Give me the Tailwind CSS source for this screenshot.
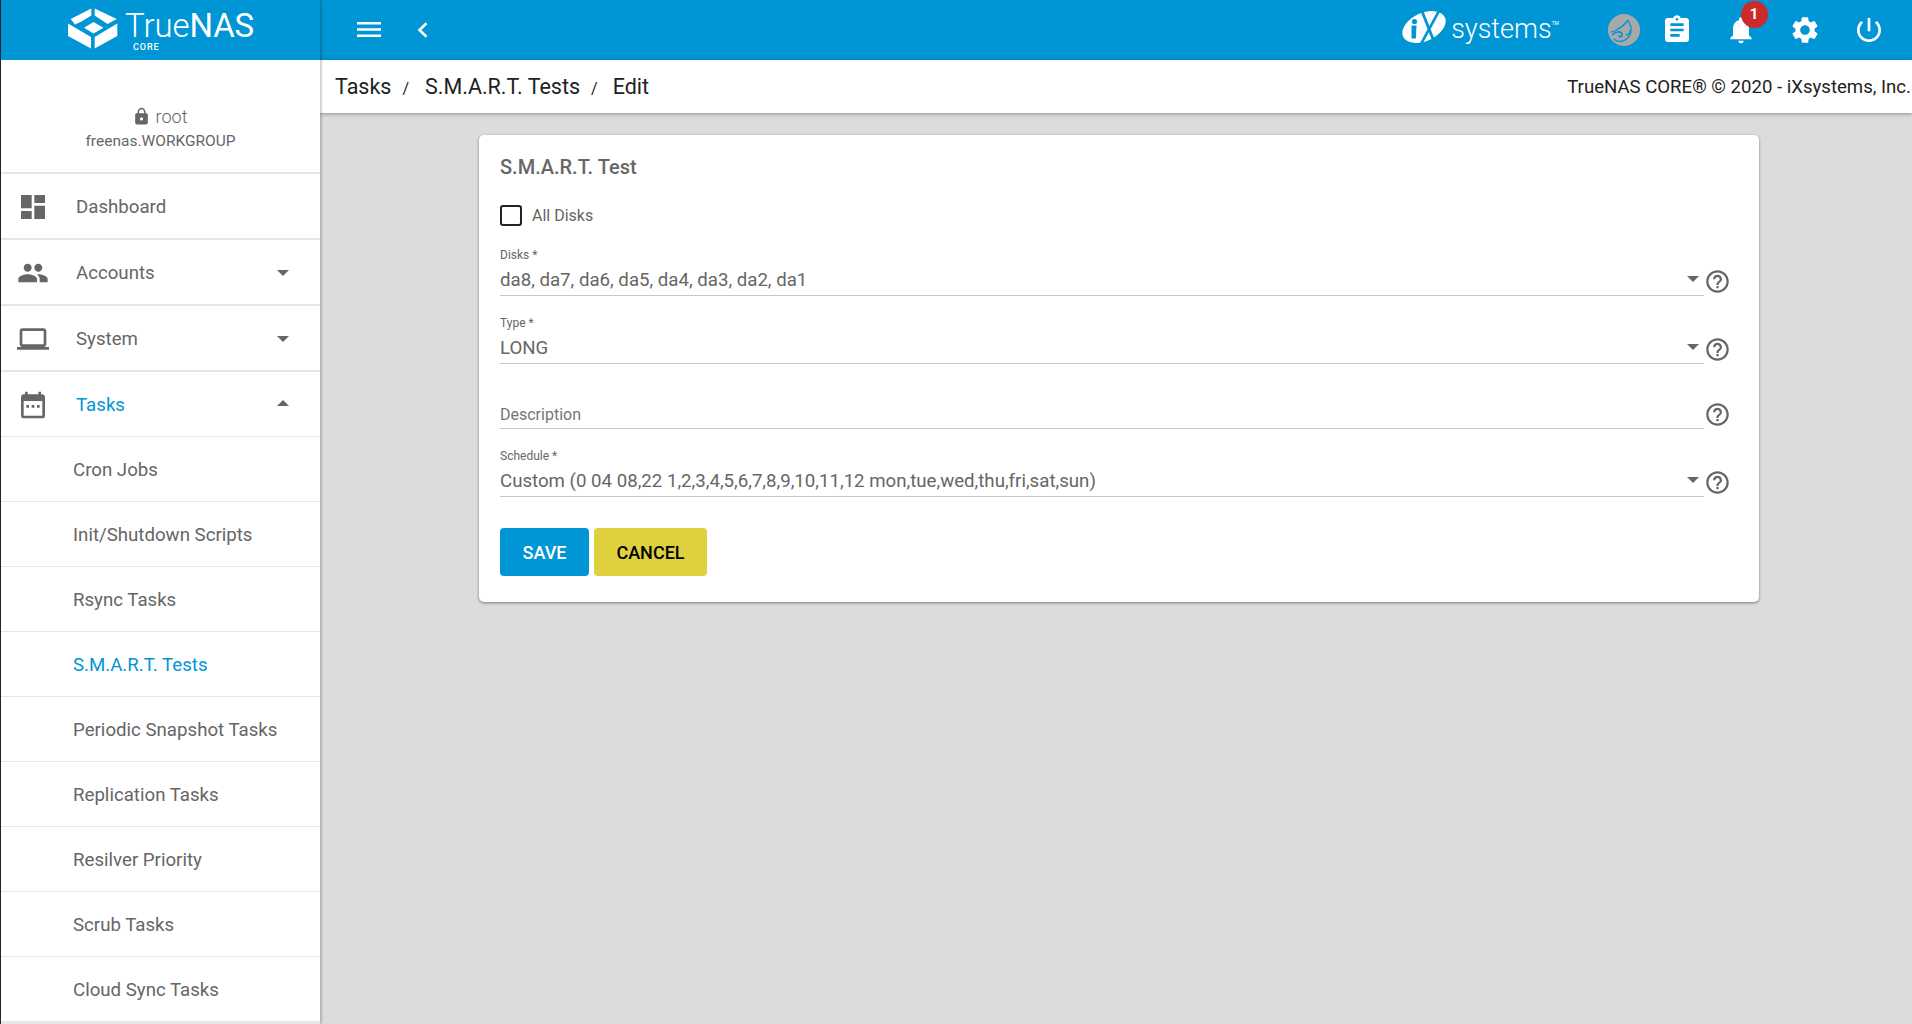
<!DOCTYPE html>
<html lang="en">
<head>
    <meta charset="UTF-8">
    <title>TrueNAS - S.M.A.R.T. Tests</title>
    <script src="https://cdn.jsdelivr.net/npm/@tailwindcss/browser@4"></script>
</head>
<body class="h-screen w-screen overflow-hidden bg-[#dcdcdc] font-[Roboto,sans-serif]">
    <div class="flex h-[1024px] w-[1912px]">
        <div class="w-px shrink-0 bg-[#1e2a30]"></div>

        <!-- sidebar -->
        <aside class="w-[319px] shrink-0 flex flex-col bg-white shadow-[1px_0_3px_rgba(0,0,0,0.3)] z-20 overflow-hidden">
            <div class="h-[60px] shrink-0 bg-[#0095d5] flex items-start">
                <svg class="ml-[63px] mt-[5px] w-[60px] h-[44px]" viewBox="0 0 60 44" fill="#fff">
                    <path d="M6.700 14 27.300 3.500v7L17.500 16.500 11 19.500z"/>
                    <path d="M30.700 3.500 52.700 14l-9.200 5-12.800-8.500z"/>
                    <path d="M20 22.700 29.500 17l10 5.700-10 5.800z"/>
                    <path d="M4 18.500 27 32v11.500L4 31z"/>
                    <path d="M53.300 18.500V31L30.700 43.500V32z"/>
                </svg>
                <div class="ml-[1px] pt-[11px] flex flex-col text-white">
                    <div class="text-[33px] leading-[30px] tracking-[-0.1px] whitespace-nowrap"><span class="font-light">True</span><span class="font-normal">NAS</span></div>
                    <div class="ml-[8px] mt-[2px] text-[9px] leading-[9px] font-medium tracking-[0.9px]">CORE</div>
                </div>
            </div>
            <div class="h-[114px] shrink-0 border-b-2 border-[#e6e6e6] flex flex-col items-center pt-[46px] text-[#666]">
                <div class="flex items-center h-[20px] pr-[2px]">
                    <svg class="w-[19px] h-[19px] mr-[5px]" viewBox="0 0 24 24" fill="#666"><path d="M18 8h-1V6c0-2.760-2.240-5-5-5S7 3.240 7 6v2H6c-1.100 0-2 .9-2 2v10c0 1.100.9 2 2 2h12c1.100 0 2-.9 2-2V10c0-1.100-.9-2-2-2zm-6 9c-1.100 0-2-.9-2-2s.9-2 2-2 2 .9 2 2-.9 2-2 2zm3.100-9H8.900V6c0-1.710 1.390-3.100 3.100-3.100 1.710 0 3.100 1.390 3.100 3.100v2z"/></svg>
                    <span class="text-[18px] font-light">root</span>
                </div>
                <div class="text-[15.500px] leading-[19px] mt-[6px]">freenas.WORKGROUP</div>
            </div>

            <nav class="flex flex-col text-[#666] text-[18.670px]">
                <div class="h-[66px] shrink-0 flex items-center border-b-2 border-[#e6e6e6] pl-[16px] pt-[2px]">
                    <svg class="w-[32px] h-[32px] mr-[27px]" viewBox="0 0 24 24" fill="#666"><path d="M3 13h8V3H3v10zm0 8h8v-6H3v6zm10 0h8V11h-8v10zm0-18v6h8V3h-8z"/></svg>
                    <span>Dashboard</span>
                </div>
                <div class="h-[66px] shrink-0 flex items-center border-b-2 border-[#e6e6e6] pl-[16px] pt-[2px]">
                    <svg class="w-[32px] h-[32px] mr-[27px]" viewBox="0 0 24 24" fill="#666"><path d="M16 11c1.660 0 2.990-1.340 2.990-3S17.660 5 16 5c-1.660 0-3 1.340-3 3s1.340 3 3 3zm-8 0c1.660 0 2.990-1.340 2.990-3S9.660 5 8 5C6.340 5 5 6.340 5 8s1.340 3 3 3zm0 2c-2.330 0-7 1.170-7 3.500V19h14v-2.500c0-2.330-4.670-3.500-7-3.500zm8 0c-.29 0-.62.02-.97.05 1.160.84 1.970 1.970 1.970 3.450V19h6v-2.500c0-2.330-4.670-3.500-7-3.500z"/></svg>
                    <span class="flex-1">Accounts</span>
                    <span class="mr-[31px] w-0 h-0 border-x-[6.500px] border-x-transparent border-t-[6.500px] border-t-[#666]"></span>
                </div>
                <div class="h-[66px] shrink-0 flex items-center border-b-2 border-[#e6e6e6] pl-[16px] pt-[2px]">
                    <svg class="w-[32px] h-[32px] mr-[27px]" viewBox="0 0 24 24" fill="#666"><path d="M20 18c1.100 0 1.990-.9 1.990-2L22 6c0-1.100-.9-2-2-2H4c-1.100 0-2 .9-2 2v10c0 1.100.9 2 2 2H0v2h24v-2h-4zM4 6h16v10H4V6z"/></svg>
                    <span class="flex-1">System</span>
                    <span class="mr-[31px] w-0 h-0 border-x-[6.500px] border-x-transparent border-t-[6.500px] border-t-[#666]"></span>
                </div>
                <div class="h-[65px] shrink-0 flex items-center border-b border-[#e6e6e6] pl-[16px] pt-[2px]">
                    <svg class="w-[32px] h-[32px] mr-[27px]" viewBox="0 0 24 24" fill="#666"><path d="M19 4h-1V2h-2v2H8V2H6v2H5c-1.100 0-2 .9-2 2v14c0 1.100.9 2 2 2h14c1.100 0 2-.9 2-2V6c0-1.100-.9-2-2-2zm0 16H5V9h14v11zM7 12h2v2H7zm4 0h2v2h-2zm4 0h2v2h-2z"/></svg>
                    <span class="flex-1 text-[#0095d5]">Tasks</span>
                    <span class="mr-[31px] mb-[4px] w-0 h-0 border-x-[6.500px] border-x-transparent border-b-[6.500px] border-b-[#666]"></span>
                </div>
                <a class="h-[65px] shrink-0 flex items-center border-b border-[#e6e6e6] pl-[72px] pt-[2px]">Cron Jobs</a>
                <a class="h-[65px] shrink-0 flex items-center border-b border-[#e6e6e6] pl-[72px] pt-[2px]">Init/Shutdown Scripts</a>
                <a class="h-[65px] shrink-0 flex items-center border-b border-[#e6e6e6] pl-[72px] pt-[2px]">Rsync Tasks</a>
                <a class="h-[65px] shrink-0 flex items-center border-b border-[#e6e6e6] pl-[72px] pt-[2px] text-[#0095d5]">S.M.A.R.T. Tests</a>
                <a class="h-[65px] shrink-0 flex items-center border-b border-[#e6e6e6] pl-[72px] pt-[2px]">Periodic Snapshot Tasks</a>
                <a class="h-[65px] shrink-0 flex items-center border-b border-[#e6e6e6] pl-[72px] pt-[2px]">Replication Tasks</a>
                <a class="h-[65px] shrink-0 flex items-center border-b border-[#e6e6e6] pl-[72px] pt-[2px]">Resilver Priority</a>
                <a class="h-[65px] shrink-0 flex items-center border-b border-[#e6e6e6] pl-[72px] pt-[2px]">Scrub Tasks</a>
                <a class="h-[67px] shrink-0 flex items-center border-b-[3px] border-[#e6e6e6] pl-[72px] pt-[2px]">Cloud Sync Tasks</a>
            </nav>
        </aside>

        <!-- main -->
        <div class="flex-1 min-w-0 flex flex-col">
            <header class="h-[60px] shrink-0 bg-[#0095d5] flex items-center text-white">
                <svg class="ml-[37px] w-[24px] h-[15px] mt-[-1px]" viewBox="0 0 24 15" fill="#fff"><path d="M0 0h24v2.400H0zM0 6.300h24v2.400H0zM0 12.600h24V15H0z"/></svg>
                <svg class="ml-[36px] w-[11px] h-[16px] mt-[-1px]" viewBox="0 0 11 16" fill="none" stroke="#fff" stroke-width="2.600"><path d="M9.500 1.200 2.500 8l7 6.800"/></svg>
                <div class="flex-1"></div>
                <div class="flex items-center mr-[48px]">
                    <svg class="w-[46px] h-[34px] mt-[-6px]" viewBox="0 0 46 34">
                        <ellipse cx="23" cy="17" rx="23" ry="14" transform="rotate(-25 23 17)" fill="#fff"/>
                        <path d="M19 0h3L35.500 34h-3z" fill="#0095d5"/>
                        <path d="M37 0h3L21.500 34h-3z" fill="#0095d5"/>
                        <circle cx="13.500" cy="11.500" r="2.600" fill="#0095d5"/>
                        <path d="M10.500 15.500h5l-.6 13h-4.400z" fill="#0095d5"/>
                    </svg>
                    <span class="text-[27px] font-light leading-none ml-[4px] mt-[-1px]">systems</span>
                    <span class="text-[5px] leading-none mb-[14px]">TM</span>
                </div>
                <svg class="ml-[1px] w-[32px] h-[32px] mr-[21px]" viewBox="0 0 32 32" fill="none">
                    <circle cx="16" cy="16" r="16" fill="#a9a9a9"/>
                    <path d="M20 6C17 10 14 13 10 15 7 17 5 18 3 18" stroke="#0095d5" stroke-width="1.500"/>
                    <path d="M4 21C8 17 13 17 14 20c1 3-3 4-3 1" stroke="#0095d5" stroke-width="1.600"/>
                    <path d="M20 6l3 7c1 6-2 12-8 14-4 1-7 0-9-2" stroke="#0095d5" stroke-width="1.300"/>
                    <path d="M18 21c3 0 4-2 4-5" stroke="#0095d5" stroke-width="1.300"/>
                </svg>
                <svg class="w-[32px] h-[32px] mr-[32px]" viewBox="0 0 24 24" fill="#fff"><path d="M19 3h-4.180C14.400 1.840 13.300 1 12 1c-1.300 0-2.400.84-2.820 2H5c-1.100 0-2 .9-2 2v14c0 1.100.9 2 2 2h14c1.100 0 2-.9 2-2V5c0-1.100-.9-2-2-2zm-7 0c.55 0 1 .45 1 1s-.45 1-1 1-1-.45-1-1 .45-1 1-1zm2 14H7v-2h7v2zm3-4H7v-2h10v2zm0-4H7V7h10v2z"/></svg>
                <div class="relative w-[32px] h-[32px] mr-[32px]">
                    <svg class="w-[32px] h-[32px]" viewBox="0 0 24 24" fill="#fff"><path d="M12 22c1.100 0 2-.9 2-2h-4c0 1.100.9 2 2 2zm6-6v-5c0-3.070-1.630-5.640-4.500-6.320V4c0-.83-.67-1.500-1.500-1.500s-1.500.67-1.500 1.500v.68C7.640 5.360 6 7.920 6 11v5l-2 2v1h16v-1l-2-2z"/></svg>
                    <span class="absolute left-[15.500px] top-[-13px] w-[27px] h-[27px] rounded-full bg-[#cd2a2a] flex items-center justify-center text-[15px] font-bold">1</span>
                </div>
                <svg class="w-[32px] h-[32px] mr-[32px]" viewBox="0 0 24 24" fill="#fff"><path d="M19.140 12.940c.04-.3.060-.61.060-.94 0-.32-.020-.64-.070-.94l2.030-1.580c.18-.14.230-.41.120-.61l-1.920-3.320c-.12-.22-.37-.29-.59-.22l-2.390.96c-.5-.38-1.030-.7-1.620-.94l-.36-2.540c-.04-.24-.24-.41-.48-.41h-3.840c-.24 0-.43.17-.47.41l-.36 2.540c-.59.24-1.130.57-1.620.94l-2.390-.96c-.22-.08-.47 0-.59.22L2.740 8.870c-.12.21-.08.47.12.61l2.030 1.580c-.05.3-.09.63-.09.94s.020.64.070.94l-2.030 1.580c-.18.14-.23.41-.12.61l1.920 3.320c.12.22.37.29.59.22l2.390-.96c.5.38 1.030.7 1.620.94l.36 2.540c.05.24.24.41.48.41h3.840c.24 0 .44-.17.47-.41l.36-2.540c.59-.24 1.130-.56 1.620-.94l2.390.96c.22.08.47 0 .59-.22l1.920-3.320c.12-.22.070-.47-.12-.61l-2.010-1.580zM12 15.600c-1.980 0-3.600-1.620-3.600-3.600s1.620-3.600 3.600-3.600 3.600 1.620 3.600 3.600-1.620 3.600-3.600 3.600z"/></svg>
                <svg class="w-[32px] h-[32px] mr-[27px]" viewBox="0 0 24 24" fill="#fff"><path d="M13 3h-2v10h2V3zm4.830 2.170-1.420 1.420C17.990 7.860 19 9.810 19 12c0 3.870-3.130 7-7 7s-7-3.130-7-7c0-2.190 1.010-4.140 2.580-5.420L6.170 5.170C4.230 6.820 3 9.260 3 12c0 4.970 4.030 9 9 9s9-4.030 9-9c0-2.740-1.230-5.180-3.170-6.830z"/></svg>
            </header>

            <div class="h-[53px] shrink-0 bg-white shadow-[0_1px_4px_rgba(0,0,0,0.35)] z-10 flex items-center justify-between pl-[15px] pt-[2px] text-[#222]">
                <div class="flex items-center text-[21.500px]">
                    <span>Tasks</span>
                    <span class="text-[16px] ml-[11px] mr-[16px] mt-[2px]">/</span>
                    <span>S.M.A.R.T. Tests</span>
                    <span class="text-[16px] ml-[11px] mr-[15px] mt-[2px]">/</span>
                    <span>Edit</span>
                </div>
                <div class="text-[18.600px] mr-[1px]">TrueNAS CORE® © 2020 - iXsystems, Inc.</div>
            </div>

            <main class="flex-1 pt-[22px] pl-[159px]">
                <section class="w-[1280px] h-[467px] bg-white rounded-[5px] shadow-[0_1px_3px_rgba(0,0,0,0.45)] pl-[21px] text-[#666]">
                    <h2 class="pt-[17px] text-[20px] leading-[30px] font-medium">S.M.A.R.T. Test</h2>
                    <label class="mt-[23px] flex items-center h-[21px] text-[16px]">
                        <span class="w-[22px] h-[21px] rounded-[3px] border-2 border-[#222] mr-[10px]"></span>
                        All Disks
                    </label>

                    <div class="mt-[21px] flex items-end">
                        <div class="w-[1204px] border-b border-[#c8c8c8] h-[49px] relative">
                            <div class="text-[12px] leading-[14px] pt-[1px] h-[15px]">Disks *</div>
                            <div class="text-[18.670px] leading-[24px] mt-[6px]">da8, da7, da6, da5, da4, da3, da2, da1</div>
                            <span class="absolute right-[5px] top-[29px] w-0 h-0 border-x-[6px] border-x-transparent border-t-[6px] border-t-[#666]"></span>
                        </div>
                        <svg class="w-[27px] h-[27px] mb-[1px]" viewBox="0 0 24 24" fill="#666"><path d="M11 18h2v-2h-2v2zm1-16C6.480 2 2 6.480 2 12s4.480 10 10 10 10-4.480 10-10S17.520 2 12 2zm0 18c-4.410 0-8-3.590-8-8s3.590-8 8-8 8 3.590 8 8-3.590 8-8 8zm0-14c-2.210 0-4 1.790-4 4h2c0-1.100.9-2 2-2s2 .9 2 2c0 2-3 1.750-3 5h2c0-2.250 3-2.500 3-5 0-2.210-1.790-4-4-4z"/></svg>
                    </div>

                    <div class="mt-[19px] flex items-end">
                        <div class="w-[1204px] border-b border-[#c8c8c8] h-[49px] relative">
                            <div class="text-[12px] leading-[14px] pt-[1px] h-[15px]">Type *</div>
                            <div class="text-[18.670px] leading-[24px] mt-[6px]">LONG</div>
                            <span class="absolute right-[5px] top-[29px] w-0 h-0 border-x-[6px] border-x-transparent border-t-[6px] border-t-[#666]"></span>
                        </div>
                        <svg class="w-[27px] h-[27px] mb-[1px]" viewBox="0 0 24 24" fill="#666"><path d="M11 18h2v-2h-2v2zm1-16C6.480 2 2 6.480 2 12s4.480 10 10 10 10-4.480 10-10S17.520 2 12 2zm0 18c-4.410 0-8-3.590-8-8s3.590-8 8-8 8 3.590 8 8-3.590 8-8 8zm0-14c-2.210 0-4 1.790-4 4h2c0-1.100.9-2 2-2s2 .9 2 2c0 2-3 1.750-3 5h2c0-2.250 3-2.500 3-5 0-2.210-1.790-4-4-4z"/></svg>
                    </div>

                    <div class="mt-[37px] flex items-end">
                        <div class="w-[1204px] border-b border-[#c8c8c8] h-[27px] pt-[1px] text-[16px] leading-[24px] text-[#757575]">Description</div>
                        <svg class="w-[27px] h-[27px] mb-[1px]" viewBox="0 0 24 24" fill="#666"><path d="M11 18h2v-2h-2v2zm1-16C6.480 2 2 6.480 2 12s4.480 10 10 10 10-4.480 10-10S17.520 2 12 2zm0 18c-4.410 0-8-3.590-8-8s3.590-8 8-8 8 3.590 8 8-3.590 8-8 8zm0-14c-2.210 0-4 1.790-4 4h2c0-1.100.9-2 2-2s2 .9 2 2c0 2-3 1.750-3 5h2c0-2.250 3-2.500 3-5 0-2.210-1.790-4-4-4z"/></svg>
                    </div>

                    <div class="mt-[19px] flex items-end">
                        <div class="w-[1204px] border-b border-[#c8c8c8] h-[49px] relative">
                            <div class="text-[12px] leading-[14px] pt-[1px] h-[15px]">Schedule *</div>
                            <div class="text-[18.670px] leading-[24px] mt-[6px]">Custom (0 04 08,22 1,2,3,4,5,6,7,8,9,10,11,12 mon,tue,wed,thu,fri,sat,sun)</div>
                            <span class="absolute right-[5px] top-[29px] w-0 h-0 border-x-[6px] border-x-transparent border-t-[6px] border-t-[#666]"></span>
                        </div>
                        <svg class="w-[27px] h-[27px] mb-[1px]" viewBox="0 0 24 24" fill="#666"><path d="M11 18h2v-2h-2v2zm1-16C6.480 2 2 6.480 2 12s4.480 10 10 10 10-4.480 10-10S17.520 2 12 2zm0 18c-4.410 0-8-3.590-8-8s3.590-8 8-8 8 3.590 8 8-3.590 8-8 8zm0-14c-2.210 0-4 1.790-4 4h2c0-1.100.9-2 2-2s2 .9 2 2c0 2-3 1.750-3 5h2c0-2.250 3-2.500 3-5 0-2.210-1.790-4-4-4z"/></svg>
                    </div>

                    <div class="mt-[31px] flex gap-[5px] text-[18px] font-medium">
                        <button class="w-[89px] h-[48px] rounded-[4px] bg-[#0095d5] text-white">SAVE</button>
                        <button class="w-[113px] h-[48px] rounded-[4px] bg-[#dfd13e] text-black">CANCEL</button>
                    </div>
                </section>
            </main>
        </div>
    </div>
</body>
</html>
